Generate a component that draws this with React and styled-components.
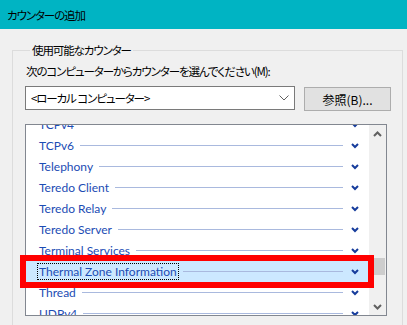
import React from 'react';
import styled, { createGlobalStyle } from 'styled-components';

const Global = createGlobalStyle`
  html, body { margin: 0; padding: 0; background: #f0f0f0; }
  body {
    width: 407px; height: 325px; overflow: hidden;
    font-family: "Noto Sans CJK JP", "Noto Sans", sans-serif;
    font-size: 11.5px; color: #000;
  }
`;

const jp = `
  font-family: "Noto Sans CJK JP", sans-serif;
  font-size: 11.5px;
  letter-spacing: -1.1px;
  font-feature-settings: "palt";
`;

const Window = styled.div`
  width: 407px; height: 325px;
  display: flex; flex-direction: column;
  background: #f0f0f0; overflow: hidden;
`;

const TitleBar = styled.div`
  height: 29px; flex: none;
  background: #00b4c3;
  display: flex; align-items: center;
  padding-left: 7px;
  ${jp}
  color: #000;
`;

const Group = styled.fieldset`
  margin: 13px 4px 0 12px;
  padding: 0 0 0 12px;
  border: 1px solid #dcdcdc;
  border-bottom: none;
  min-width: 0;
  flex: 1;
`;

const Legend = styled.legend`
  margin-left: 5px;
  padding: 0 2px;
  line-height: 16px;
  ${jp}
`;

const Label = styled.div`
  margin-top: 5px;
  padding-left: 1px;
  line-height: 16px;
  ${jp}
`;

const SourceRow = styled.div`
  margin-top: 7px;
  display: flex; gap: 9px; align-items: flex-start;
`;

const Combo = styled.div`
  width: 270px; height: 24px; box-sizing: border-box;
  border: 1px solid #7a7a7a; background: #fff;
  display: flex; align-items: center; justify-content: space-between;
  padding: 0 5px 0 5px;
  ${jp}
`;

const Button = styled.div`
  width: 87px; height: 24px; box-sizing: border-box;
  margin-top: 1px;
  background: #e1e1e1; border: 1px solid #adadad;
  display: flex; align-items: center; justify-content: center;
  font-family: "Noto Sans CJK JP", sans-serif;
  font-size: 12px;
  font-feature-settings: "palt";
`;

const ListWrap = styled.div`
  position: relative;
  margin-top: 13px;
  width: 362px; height: 192px;
`;

const ListBox = styled.div`
  display: flex; height: 100%; box-sizing: border-box;
  border: 1px solid #828790; background: #fff;
  overflow: hidden;
`;

const Rows = styled.div`
  flex: 1; overflow: hidden;
`;

const RowsInner = styled.div`
  margin-top: ${p => -p.$offset}px;
`;

const Row = styled.div`
  height: 21px;
  display: flex; align-items: center;
  padding: 0 10px 0 11px;
  background: ${p => (p.$selected ? '#cce8ff' : 'transparent')};
`;

const Name = styled.span`
  padding: 0 1px;
  line-height: 15px;
  border: 1px dotted ${p => (p.$selected ? '#000' : 'transparent')};
  color: #1c4cb4;
  white-space: nowrap;
  font-family: Lato, "Noto Sans", sans-serif;
  font-size: 12px;
`;

const Rule = styled.div`
  flex: 1; height: 1px;
  background: #a9b9de;
  margin: 0 8px 0 4px;
`;

const Scrollbar = styled.div`
  width: 17px; flex: none;
  background: #f0f0f0;
  display: flex; flex-direction: column;
`;

const Arrow = styled.div`
  height: 17px; flex: none;
  display: flex; align-items: center; justify-content: center;
`;

const Track = styled.div`
  flex: 1;
`;

const Thumb = styled.div`
  margin: ${p => p.$top}px 1px 0 1px;
  height: 17px;
  background: #cdcdcd;
`;

const Highlight = styled.div`
  position: absolute;
  left: -5px; top: 131px;
  width: 354px; height: 33px;
  box-sizing: border-box;
  border: 6px solid #ff0000;
  pointer-events: none;
`;

const Chevron = () => (
  <svg width="8" height="6" viewBox="0 0 8 6">
    <polyline points="1,1 4,4 7,1" fill="none" stroke="#163c9c" strokeWidth="2" />
  </svg>
);

const ComboChevron = () => (
  <svg width="10" height="6" viewBox="0 0 10 6">
    <polyline points="0.5,0.5 5,5 9.5,0.5" fill="none" stroke="#606060" strokeWidth="1" />
  </svg>
);

const ScrollArrow = ({ up }) => (
  <svg width="9" height="6" viewBox="0 0 9 6">
    <polyline
      points={up ? '1,5 4.5,1.5 8,5' : '1,1 4.5,4.5 8,1'}
      fill="none" stroke="#606060" strokeWidth="2"
    />
  </svg>
);

const counters = [
  'TCPv4',
  'TCPv6',
  'Telephony',
  'Teredo Client',
  'Teredo Relay',
  'Teredo Server',
  'Terminal Services',
  'Thermal Zone Information',
  'Thread',
  'UDPv4',
];

export default function App() {
  const selected = 'Thermal Zone Information';
  return (
    <Window>
      <Global />
      <TitleBar>カウンターの追加</TitleBar>
      <Group>
        <Legend>使用可能なカウンター</Legend>
        <Label>次のコンピューターからカウンターを選んでください(M):</Label>
        <SourceRow>
          <Combo>
            <span>&lt;ローカル コンピューター&gt;</span>
            <ComboChevron />
          </Combo>
          <Button>参照(B)...</Button>
        </SourceRow>
        <ListWrap>
          <ListBox>
            <Rows>
              <RowsInner $offset={11}>
                {counters.map(c => (
                  <Row key={c} $selected={c === selected}>
                    <Name $selected={c === selected}>{c}</Name>
                    <Rule />
                    <Chevron />
                  </Row>
                ))}
              </RowsInner>
            </Rows>
            <Scrollbar>
              <Arrow><ScrollArrow up /></Arrow>
              <Track><Thumb $top={116} /></Track>
              <Arrow><ScrollArrow /></Arrow>
            </Scrollbar>
          </ListBox>
          <Highlight />
        </ListWrap>
      </Group>
    </Window>
  );
}
